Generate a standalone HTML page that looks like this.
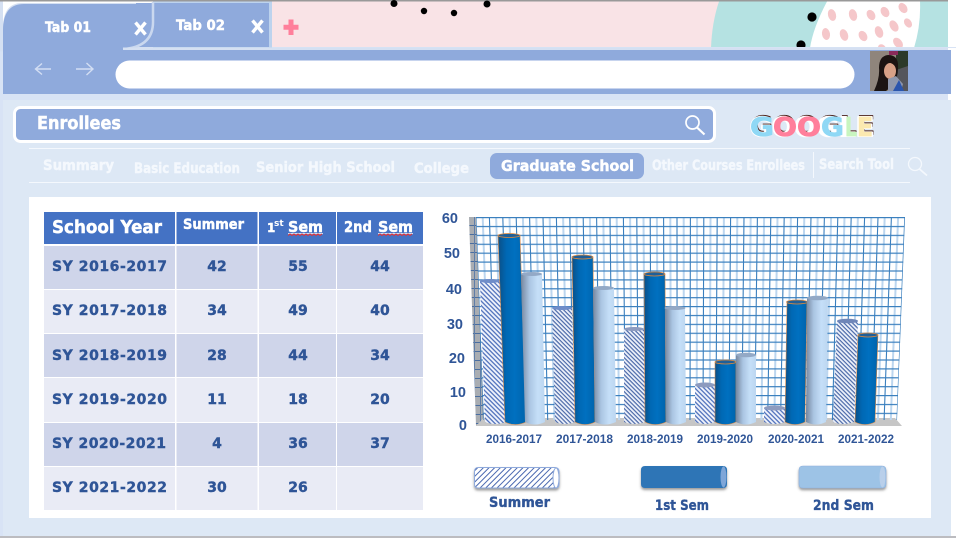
<!DOCTYPE html>
<html><head><meta charset="utf-8"><title>Enrollees</title>
<style>
html,body{margin:0;padding:0;background:#fff;width:956px;height:538px;overflow:hidden}
svg{display:block;position:absolute;left:0;top:0}
text{font-family:"DejaVu Sans","Liberation Sans",sans-serif;font-weight:bold}
.t{fill:#2f5597;font-size:14px;stroke:#2f5597;stroke-width:.4}
.n{fill:#f4f8fd;font-size:14px;stroke:#f4f8fd;stroke-width:.4}
.w{fill:#fff;stroke:#fff;stroke-width:.45}
.c{fill:#2f5597;font-size:12px;font-family:"Liberation Sans",sans-serif}
.y{fill:#2f5597;font-size:14.5px;font-family:"Liberation Sans",sans-serif;text-anchor:end}
</style></head><body>
<svg width="956" height="538" viewBox="0 0 956 538" xmlns="http://www.w3.org/2000/svg">
<defs>
<linearGradient id="gb" x1="0" x2="1" y1="0" y2="0"><stop offset="0" stop-color="#0b4f86"/><stop offset=".3" stop-color="#0068b4"/><stop offset=".6" stop-color="#0070c0"/><stop offset="1" stop-color="#0064ac"/></linearGradient>
<linearGradient id="gl" x1="0" x2="1" y1="0" y2="0"><stop offset="0" stop-color="#76879f"/><stop offset=".35" stop-color="#aac5e2"/><stop offset=".7" stop-color="#c5dff8"/><stop offset="1" stop-color="#bcd6f0"/></linearGradient>
<pattern id="hs" width="3.2" height="3.2" patternUnits="userSpaceOnUse" patternTransform="rotate(45)"><rect width="3.2" height="3.2" fill="#eef2fb"/><rect y="0" width="3.2" height="1.3" fill="#5273bd"/></pattern>
<pattern id="hs2" width="3" height="3" patternUnits="userSpaceOnUse" patternTransform="rotate(45)"><rect width="3" height="3" fill="#eef2fb"/><rect y="0" width="3" height="1.2" fill="#4a68a8"/></pattern>
<pattern id="hl" width="4" height="4" patternUnits="userSpaceOnUse" patternTransform="rotate(-45)"><rect width="4" height="4" fill="#fff"/><rect y="0" width="4" height="1" fill="#4a68b0"/></pattern>
<pattern id="hh" width="100" height="8.9" y="217" patternUnits="userSpaceOnUse"><rect y="0" width="100" height="1.2" fill="#3a7fbe"/></pattern>
<pattern id="wall" width="6" height="9" patternUnits="userSpaceOnUse"><rect width="6" height="9" fill="#a9adb2"/><rect width="6" height="1" fill="#4a6ea0"/><rect width="1" height="9" fill="#5f7ea8"/></pattern>
<clipPath id="wc"><polygon points="476,217 905,217 897,420 483,420"/></clipPath>
<filter id="sh" x="-10%" y="-20%" width="120%" height="160%"><feDropShadow dx="0" dy="2" stdDeviation="1.2" flood-color="#555" flood-opacity=".6"/></filter>
</defs>

<!-- page background -->
<rect width="956" height="538" fill="#fff"/>
<rect x="0" y="0" width="948" height="1.5" fill="#999"/>
<!-- header decoration -->
<rect x="269" y="1.5" width="679" height="47" fill="#f9e3e6"/>
<path d="M719 1.5H948V48H711Q712 22 719 1.5Z" fill="#b5e2e2"/>
<path d="M827 1.5H920Q921 25 914 48H810Q813 28 827 1.5Z" fill="#fff"/>
<g fill="#f5c7ca">
<ellipse cx="832" cy="15" rx="4" ry="6" transform="rotate(-15 832 15)"/>
<ellipse cx="853" cy="15" rx="4" ry="6" transform="rotate(-15 853 15)"/>
<ellipse cx="871" cy="15" rx="4" ry="5.5" transform="rotate(-30 871 15)"/>
<ellipse cx="885" cy="12" rx="4" ry="5.5" transform="rotate(-30 885 12)"/>
<ellipse cx="903" cy="8" rx="4" ry="5.5" transform="rotate(-35 903 8)"/>
<ellipse cx="908" cy="23" rx="3.5" ry="5" transform="rotate(-35 908 23)"/>
<ellipse cx="894" cy="26" rx="4" ry="6" transform="rotate(-30 894 26)"/>
<ellipse cx="879" cy="32" rx="4" ry="6" transform="rotate(-20 879 32)"/>
<ellipse cx="863" cy="36" rx="4" ry="5.5" transform="rotate(-30 863 36)"/>
<ellipse cx="844" cy="35" rx="4" ry="6" transform="rotate(-20 844 35)"/>
<ellipse cx="826" cy="34" rx="4" ry="6" transform="rotate(-10 826 34)"/>
<ellipse cx="898" cy="43" rx="4" ry="6" transform="rotate(-40 898 43)"/>
<ellipse cx="882" cy="49" rx="4" ry="5" transform="rotate(-30 882 49)"/>
</g>
<g fill="#000">
<circle cx="394" cy="3.5" r="3.5"/><circle cx="424" cy="11" r="3.2"/><circle cx="454" cy="13" r="3.2"/><circle cx="487" cy="4" r="3.5"/>
<circle cx="812" cy="17" r="4.6"/><circle cx="801" cy="45" r="4.6"/>
</g>
<!-- tabs -->
<rect x="0" y="47" width="956" height="491" fill="#d8e3f5"/>
<rect x="948" y="48" width="8" height="490" fill="#fff"/>
<path d="M3 48V28Q3 3 22 3H272V50H3Z" fill="#d5e0f2"/>
<rect x="0" y="1.500" width="3" height="50" fill="#d5e0f2"/>
<rect x="153" y="1.500" width="119" height="47" fill="#bdd3ee"/>
<rect x="136" y="3" width="133" height="44" fill="#8faadc"/>
<path d="M3 52V30Q3 4 24 4H152V22Q152 48 123 48V52Z" fill="#8faadc"/>
<path d="M153 2V20Q154 47 123 49" fill="none" stroke="#cad8ef" stroke-width="2.500"/>
<rect x="3" y="50" width="948" height="44" fill="#8faadc"/>
<rect x="123" y="47.500" width="825" height="2.500" fill="#d5e0f2"/>
<text class="w" x="45" y="32" font-size="14" textLength="46" lengthAdjust="spacingAndGlyphs">Tab 01</text>
<text class="w" x="176" y="30" font-size="14" textLength="49" lengthAdjust="spacingAndGlyphs">Tab 02</text>
<path d="M135.500 22.500L145.500 34.500M145.500 22.500L135.500 34.500" stroke="#fff" stroke-width="3.400" fill="none"/>
<path d="M252.500 20.500L262.500 32.500M262.500 20.500L252.500 32.500" stroke="#fff" stroke-width="3.400" fill="none"/>
<path d="M291 19.500V35M283.500 27.300H298.500" stroke="#ff7f9b" stroke-width="5" fill="none"/>
<!-- nav arrows -->
<path d="M51 69H36M42 63.500L35.500 69L42 74.500" stroke="#d3def3" stroke-width="1.400" fill="none"/>
<path d="M76 69H92.500M86.500 63L93 69L86.500 75" stroke="#d3def3" stroke-width="1.400" fill="none"/>
<rect x="115.500" y="60.500" width="739" height="28" rx="14" fill="#fff"/>
<!-- avatar -->
<rect x="870" y="51" width="38" height="40" fill="#8f857c"/>
<rect x="896" y="51" width="12" height="20" fill="#2c3a2a"/>
<rect x="889" y="51" width="9" height="4" fill="#8a2a5a"/>
<path d="M896 70L908 66V91H896Z" fill="#55565c"/>
<path d="M874 91Q880 78 879 68Q879 56 888 55Q899 55 898 68Q898 78 893 85L886 91Z" fill="#1c1412"/>
<ellipse cx="890" cy="71" rx="6" ry="8" fill="#d8a187"/>
<path d="M884 64Q890 60 896 67Q897 58 889 57Q883 58 884 64Z" fill="#1c1412"/>
<path d="M888 79L896 76L903 84L901 91H888Z" fill="#8f97ac"/>
<path d="M893 91L899 80L904 91Z" fill="#2b55ad"/>

<!-- main panel -->
<rect x="3" y="100" width="948" height="436" fill="#dde8f5"/>
<rect x="0" y="536" width="956" height="2" fill="#bcbcc0"/>
<rect x="14.500" y="107.500" width="700" height="34" rx="6" fill="#8faadc" stroke="#fff" stroke-width="3"/>
<text class="w" x="37" y="129" font-size="18" textLength="84" lengthAdjust="spacingAndGlyphs">Enrollees</text>
<circle cx="692.500" cy="122.500" r="6.500" fill="none" stroke="#fff" stroke-width="1.700"/>
<path d="M697 127.500L704.500 134.500" stroke="#fff" stroke-width="2.200"/>
<!-- GOOGLE -->
<g font-size="26" stroke-linejoin="round">
<text x="751" y="134.500" fill="#4a2018" stroke="#4a2018" stroke-width=".8" textLength="124" lengthAdjust="spacingAndGlyphs">GOOGLE</text>
<text x="750" y="136" fill="#fff" stroke="#fff" stroke-width="2" textLength="124" lengthAdjust="spacingAndGlyphs">GOOGLE</text>
<g stroke-width=".8">
<text x="750" y="136" fill="#8fd8f5" stroke="#8fd8f5" textLength="24" lengthAdjust="spacingAndGlyphs">G</text>
<text x="773" y="136" fill="#ff7f9b" stroke="#ff7f9b" textLength="24" lengthAdjust="spacingAndGlyphs">O</text>
<text x="797" y="136" fill="#ff7f9b" stroke="#ff7f9b" textLength="24" lengthAdjust="spacingAndGlyphs">O</text>
<text x="821" y="136" fill="#8fd8f5" stroke="#8fd8f5" textLength="23" lengthAdjust="spacingAndGlyphs">G</text>
<text x="845" y="136" fill="#c8f5c0" stroke="#c8f5c0" textLength="12" lengthAdjust="spacingAndGlyphs">L</text>
<text x="857" y="136" fill="#fbe9b0" stroke="#fbe9b0" textLength="16" lengthAdjust="spacingAndGlyphs">E</text>
</g>
</g>
<!-- nav -->
<rect x="29" y="148" width="881" height="1" fill="#f4f8fd"/>
<rect x="29" y="182" width="881" height="1" fill="#f4f8fd"/>
<rect x="813" y="152" width="1" height="26" fill="#f4f8fd"/>
<rect x="490" y="153" width="154" height="26" rx="7" fill="#8faadc"/>
<text class="n" x="43" y="170" textLength="71" lengthAdjust="spacingAndGlyphs">Summary</text>
<text class="n" x="134" y="173" textLength="106" lengthAdjust="spacingAndGlyphs">Basic Education</text>
<text class="n" x="256" y="172" textLength="139" lengthAdjust="spacingAndGlyphs">Senior High School</text>
<text class="n" x="414" y="173" textLength="55" lengthAdjust="spacingAndGlyphs">College</text>
<text class="w" x="501" y="171" font-size="15" textLength="133" lengthAdjust="spacingAndGlyphs">Graduate School</text>
<text class="n" x="652" y="170" font-size="13" textLength="153" lengthAdjust="spacingAndGlyphs">Other Courses Enrollees</text>
<text class="n" x="819" y="169" font-size="13" textLength="75" lengthAdjust="spacingAndGlyphs">Search Tool</text>
<circle cx="915" cy="164" r="6.500" fill="none" stroke="#f4f8fd" stroke-width="1.300"/>
<path d="M919.500 169L927 175.500" stroke="#f4f8fd" stroke-width="1.800"/>

<!-- card -->
<rect x="29" y="197" width="902" height="321" fill="#fff"/>
<!-- table -->
<rect x="44" y="212" width="131" height="32" fill="#4472c4"/>
<rect x="176.500" y="212" width="81" height="32" fill="#4472c4"/>
<rect x="259" y="212" width="77" height="32" fill="#4472c4"/>
<rect x="337" y="212" width="86" height="32" fill="#4472c4"/>
<g fill="#cfd5ea">
<rect x="44" y="246" width="131" height="43"/><rect x="176.500" y="246" width="81" height="43"/><rect x="259" y="246" width="77" height="43"/><rect x="337" y="246" width="86" height="43"/>
<rect x="44" y="334" width="131" height="43"/><rect x="176.500" y="334" width="81" height="43"/><rect x="259" y="334" width="77" height="43"/><rect x="337" y="334" width="86" height="43"/>
<rect x="44" y="423" width="131" height="43"/><rect x="176.500" y="423" width="81" height="43"/><rect x="259" y="423" width="77" height="43"/><rect x="337" y="423" width="86" height="43"/>
</g>
<g fill="#e9ebf5">
<rect x="44" y="290" width="131" height="43"/><rect x="176.500" y="290" width="81" height="43"/><rect x="259" y="290" width="77" height="43"/><rect x="337" y="290" width="86" height="43"/>
<rect x="44" y="378" width="131" height="44"/><rect x="176.500" y="378" width="81" height="44"/><rect x="259" y="378" width="77" height="44"/><rect x="337" y="378" width="86" height="44"/>
<rect x="44" y="467" width="131" height="43"/><rect x="176.500" y="467" width="81" height="43"/><rect x="259" y="467" width="77" height="43"/><rect x="337" y="467" width="86" height="43"/>
</g>
<text class="w" x="52" y="233" font-size="18" textLength="110" lengthAdjust="spacingAndGlyphs">School Year</text>
<text class="w" x="183" y="229" font-size="14" textLength="61" lengthAdjust="spacingAndGlyphs">Summer</text>
<text class="w" x="267" y="232" font-size="12">1</text>
<text x="274" y="226" fill="#fff" font-size="9">st</text>
<text class="w" x="288" y="232" font-size="15" textLength="35" lengthAdjust="spacingAndGlyphs">Sem</text>
<text class="w" x="344" y="232" font-size="15" textLength="28" lengthAdjust="spacingAndGlyphs">2nd</text>
<text class="w" x="378" y="232" font-size="15" textLength="35" lengthAdjust="spacingAndGlyphs">Sem</text>
<path d="M288 233.700H323M378 233.700H413" stroke="#fff" stroke-width=".8"/>
<path d="M288 235.500l2-1.500 2 1.500 2-1.500 2 1.500 2-1.500 2 1.500 2-1.500 2 1.500 2-1.500 2 1.500 2-1.500 2 1.500 2-1.500 2 1.500 2-1.500 2 1.500 2-1.500" fill="none" stroke="#e83030" stroke-width="1"/>
<path d="M378 235.500l2-1.500 2 1.500 2-1.500 2 1.500 2-1.500 2 1.500 2-1.500 2 1.500 2-1.500 2 1.500 2-1.500 2 1.500 2-1.500 2 1.500 2-1.500 2 1.500 2-1.500" fill="none" stroke="#e83030" stroke-width="1"/>

<text class="t" x="52" y="271" textLength="115" lengthAdjust="spacing">SY 2016-2017</text>
<text class="t" x="52" y="315" textLength="115" lengthAdjust="spacing">SY 2017-2018</text>
<text class="t" x="52" y="360" textLength="115" lengthAdjust="spacing">SY 2018-2019</text>
<text class="t" x="52" y="404" textLength="115" lengthAdjust="spacing">SY 2019-2020</text>
<text class="t" x="52" y="448" textLength="114" lengthAdjust="spacing">SY 2020-2021</text>
<text class="t" x="52" y="492" textLength="115" lengthAdjust="spacing">SY 2021-2022</text>
<text class="t" x="217" y="271" text-anchor="middle">42</text><text class="t" x="298" y="271" text-anchor="middle">55</text><text class="t" x="380" y="271" text-anchor="middle">44</text>
<text class="t" x="217" y="315" text-anchor="middle">34</text><text class="t" x="298" y="315" text-anchor="middle">49</text><text class="t" x="380" y="315" text-anchor="middle">40</text>
<text class="t" x="217" y="360" text-anchor="middle">28</text><text class="t" x="298" y="360" text-anchor="middle">44</text><text class="t" x="380" y="360" text-anchor="middle">34</text>
<text class="t" x="217" y="404" text-anchor="middle">11</text><text class="t" x="298" y="404" text-anchor="middle">18</text><text class="t" x="380" y="404" text-anchor="middle">20</text>
<text class="t" x="217" y="448" text-anchor="middle">4</text><text class="t" x="298" y="448" text-anchor="middle">36</text><text class="t" x="380" y="448" text-anchor="middle">37</text>
<text class="t" x="217" y="492" text-anchor="middle">30</text><text class="t" x="298" y="492" text-anchor="middle">26</text>

<!-- chart -->
<polygon points="469,217 476,217 484,418 476,426" fill="url(#wall)"/>
<polygon points="484,418 895,418 902,426 476,426" fill="#c6c6c6"/>
<g clip-path="url(#wc)">
<path transform="translate(6.700,0)" fill="none" stroke="#bcd6ef" stroke-width="2" d="M476 217L483 420M489.400 217L495.900 420M502.800 217L508.900 420M516.200 217L521.800 420M529.600 217L534.800 420M543 217L547.700 420M556.400 217L560.600 420M569.800 217L573.600 420M583.200 217L586.500 420M596.600 217L599.500 420M610 217L612.400 420M623.400 217L625.300 420M636.800 217L638.300 420M650.200 217L651.200 420M663.600 217L664.200 420M677 217L677.100 420M690.400 217L690 420M703.800 217L703 420M717.200 217L715.900 420M730.600 217L728.900 420M744 217L741.800 420M757.400 217L754.700 420M770.800 217L767.700 420M784.200 217L780.600 420M797.600 217L793.600 420M811 217L806.500 420M824.400 217L819.400 420M837.800 217L832.400 420M851.200 217L845.300 420M864.600 217L858.300 420M878 217L871.200 420M891.400 217L884.100 420"/>
<rect x="470" y="217" width="440" height="204" fill="url(#hh)"/>
<path fill="none" stroke="#3a7fbe" stroke-width="1.100" d="M476 217L483 420M489.400 217L495.900 420M502.800 217L508.900 420M516.200 217L521.800 420M529.600 217L534.800 420M543 217L547.700 420M556.400 217L560.600 420M569.800 217L573.600 420M583.200 217L586.500 420M596.600 217L599.500 420M610 217L612.400 420M623.400 217L625.300 420M636.800 217L638.300 420M650.200 217L651.200 420M663.600 217L664.200 420M677 217L677.100 420M690.400 217L690 420M703.800 217L703 420M717.200 217L715.900 420M730.600 217L728.900 420M744 217L741.800 420M757.400 217L754.700 420M770.800 217L767.700 420M784.200 217L780.600 420M797.600 217L793.600 420M811 217L806.500 420M824.400 217L819.400 420M837.800 217L832.400 420M851.200 217L845.300 420M864.600 217L858.300 420M878 217L871.200 420M891.400 217L884.100 420M904.800 217L897 420"/>
</g>

<!-- bars group 1 -->
<path d="M480 281L485 422Q495 426 506 422L500 281Z" fill="url(#hs)"/><ellipse cx="490" cy="281" rx="10" ry="2" fill="#6f8dc9"/>
<path d="M498 235L505 422Q515 427 526 422L520 235Z" fill="url(#gb)" stroke="#d98a4a" stroke-width=".6"/><ellipse cx="509" cy="235.500" rx="11" ry="2" fill="#1f5f98" stroke="#e08a3c" stroke-width=".8"/>
<path d="M521 274L525 422Q535 427 545 422L542 274Z" fill="url(#gl)"/><ellipse cx="531.500" cy="274" rx="10.500" ry="2" fill="#93a9c6"/>
<!-- group 2 -->
<path d="M552 308L555 422Q565 426 575 422L572 308Z" fill="url(#hs2)"/><ellipse cx="562" cy="308" rx="10" ry="2" fill="#6f8dc9"/>
<path d="M572 257L575 422Q585 427 595 422L593 257Z" fill="url(#gb)" stroke="#d98a4a" stroke-width=".6"/><ellipse cx="582.500" cy="257" rx="10.500" ry="2" fill="#1f5f98" stroke="#e08a3c" stroke-width=".8"/>
<path d="M593 288L595 422Q605 427 616 422L614 288Z" fill="url(#gl)"/><ellipse cx="603.500" cy="288" rx="10.500" ry="2" fill="#93a9c6"/>
<!-- group 3 -->
<path d="M624 329L624 422Q634 426 645 422L644 329Z" fill="url(#hs2)"/><ellipse cx="634" cy="329" rx="10" ry="2" fill="#8d9bbf"/>
<path d="M644 274L645 422Q655 427 666 422L665 274Z" fill="url(#gb)" stroke="#d98a4a" stroke-width=".6"/><ellipse cx="654.500" cy="274" rx="10.500" ry="2" fill="#1f5f98" stroke="#e08a3c" stroke-width=".8"/>
<path d="M665 308L666 422Q676 427 686 422L685 308Z" fill="url(#gl)"/><ellipse cx="675" cy="308" rx="10.500" ry="2" fill="#93a9c6"/>
<!-- group 4 -->
<path d="M695 385L695 422Q705 426 715 422L715 385Z" fill="url(#hs)"/><ellipse cx="705" cy="385" rx="10" ry="2.500" fill="#8d9bbf"/>
<path d="M715 362L715 422Q725 427 736 422L736 362Z" fill="url(#gb)" stroke="#d98a4a" stroke-width=".6"/><ellipse cx="725.500" cy="362" rx="10.500" ry="2" fill="#1f5f98" stroke="#e08a3c" stroke-width=".8"/>
<path d="M736 355L736 422Q746 427 756 422L756 355Z" fill="url(#gl)"/><ellipse cx="746" cy="355" rx="10" ry="2.300" fill="#93a9c6"/>
<!-- group 5 -->
<path d="M764 408L764 422Q774 426 785 422L785 408Z" fill="url(#hs)"/><ellipse cx="774.500" cy="408" rx="10.500" ry="2.500" fill="#8d9bbf"/>
<path d="M787 302L785 422Q795 427 805 422L807 302Z" fill="url(#gb)" stroke="#d98a4a" stroke-width=".6"/><ellipse cx="797" cy="302" rx="10.500" ry="2" fill="#1f5f98" stroke="#e08a3c" stroke-width=".8"/>
<path d="M807 298L806 422Q816 427 826 422L828 298Z" fill="url(#gl)"/><ellipse cx="817.500" cy="298" rx="10.500" ry="2.300" fill="#93a9c6"/>
<!-- group 6 -->
<path d="M837 321L833 422Q843 426 854 422L858 321Z" fill="url(#hs2)"/><ellipse cx="847.500" cy="321" rx="10.500" ry="2.300" fill="#6f86b8"/>
<path d="M858 335L855 422Q865 427 875 422L878 335Z" fill="url(#gb)" stroke="#d98a4a" stroke-width=".6"/><ellipse cx="868" cy="335" rx="10" ry="2" fill="#1f5f98" stroke="#e08a3c" stroke-width=".8"/>

<!-- axis labels -->
<text class="y" x="458" y="223">60</text>
<text class="y" x="460" y="258">50</text>
<text class="y" x="462" y="294">40</text>
<text class="y" x="463" y="329">30</text>
<text class="y" x="465" y="363">20</text>
<text class="y" x="466" y="397">10</text>
<text class="y" x="467" y="430">0</text>
<text class="c" x="486" y="443" textLength="56" lengthAdjust="spacingAndGlyphs">2016-2017</text>
<text class="c" x="556" y="443" textLength="57" lengthAdjust="spacingAndGlyphs">2017-2018</text>
<text class="c" x="627" y="443" textLength="56" lengthAdjust="spacingAndGlyphs">2018-2019</text>
<text class="c" x="697" y="443" textLength="56" lengthAdjust="spacingAndGlyphs">2019-2020</text>
<text class="c" x="768" y="443" textLength="56" lengthAdjust="spacingAndGlyphs">2020-2021</text>
<text class="c" x="838" y="443" textLength="56" lengthAdjust="spacingAndGlyphs">2021-2022</text>

<!-- legend -->
<g filter="url(#sh)">
<path d="M478 467.500H555Q559 467.500 559 472V484Q559 488 555 488H478Q474.500 488 474.500 484V472Q474.500 467.500 478 467.500Z" fill="url(#hl)" stroke="#8faadc"/>
<ellipse cx="556" cy="478" rx="3" ry="10" fill="#fff" stroke="#8faadc"/>
</g>
<g filter="url(#sh)">
<path d="M645 466H723Q727 466 727 470V484Q727 488 723 488H645Q641 488 641 484V470Q641 466 645 466Z" fill="#2e75b6"/>
<ellipse cx="723.500" cy="477" rx="3" ry="10.500" fill="#7fa6d8"/>
</g>
<g filter="url(#sh)">
<path d="M803 466H882Q886 466 886 470V484Q886 488 882 488H803Q799 488 799 484V470Q799 466 803 466Z" fill="#9dc3e6" stroke="#8fb0de" stroke-width=".6"/>
<ellipse cx="882.500" cy="477" rx="3" ry="10.500" fill="#b9cfea"/>
</g>
<text x="489" y="507" fill="#2f5597" stroke="#2f5597" stroke-width=".35" font-size="14" textLength="61" lengthAdjust="spacingAndGlyphs">Summer</text>
<text x="655" y="510" fill="#2f5597" stroke="#2f5597" stroke-width=".35" font-size="14" textLength="54" lengthAdjust="spacingAndGlyphs">1st Sem</text>
<text x="813" y="510" fill="#2f5597" stroke="#2f5597" stroke-width=".35" font-size="14" textLength="61" lengthAdjust="spacingAndGlyphs">2nd Sem</text>
</svg>
</body></html>
